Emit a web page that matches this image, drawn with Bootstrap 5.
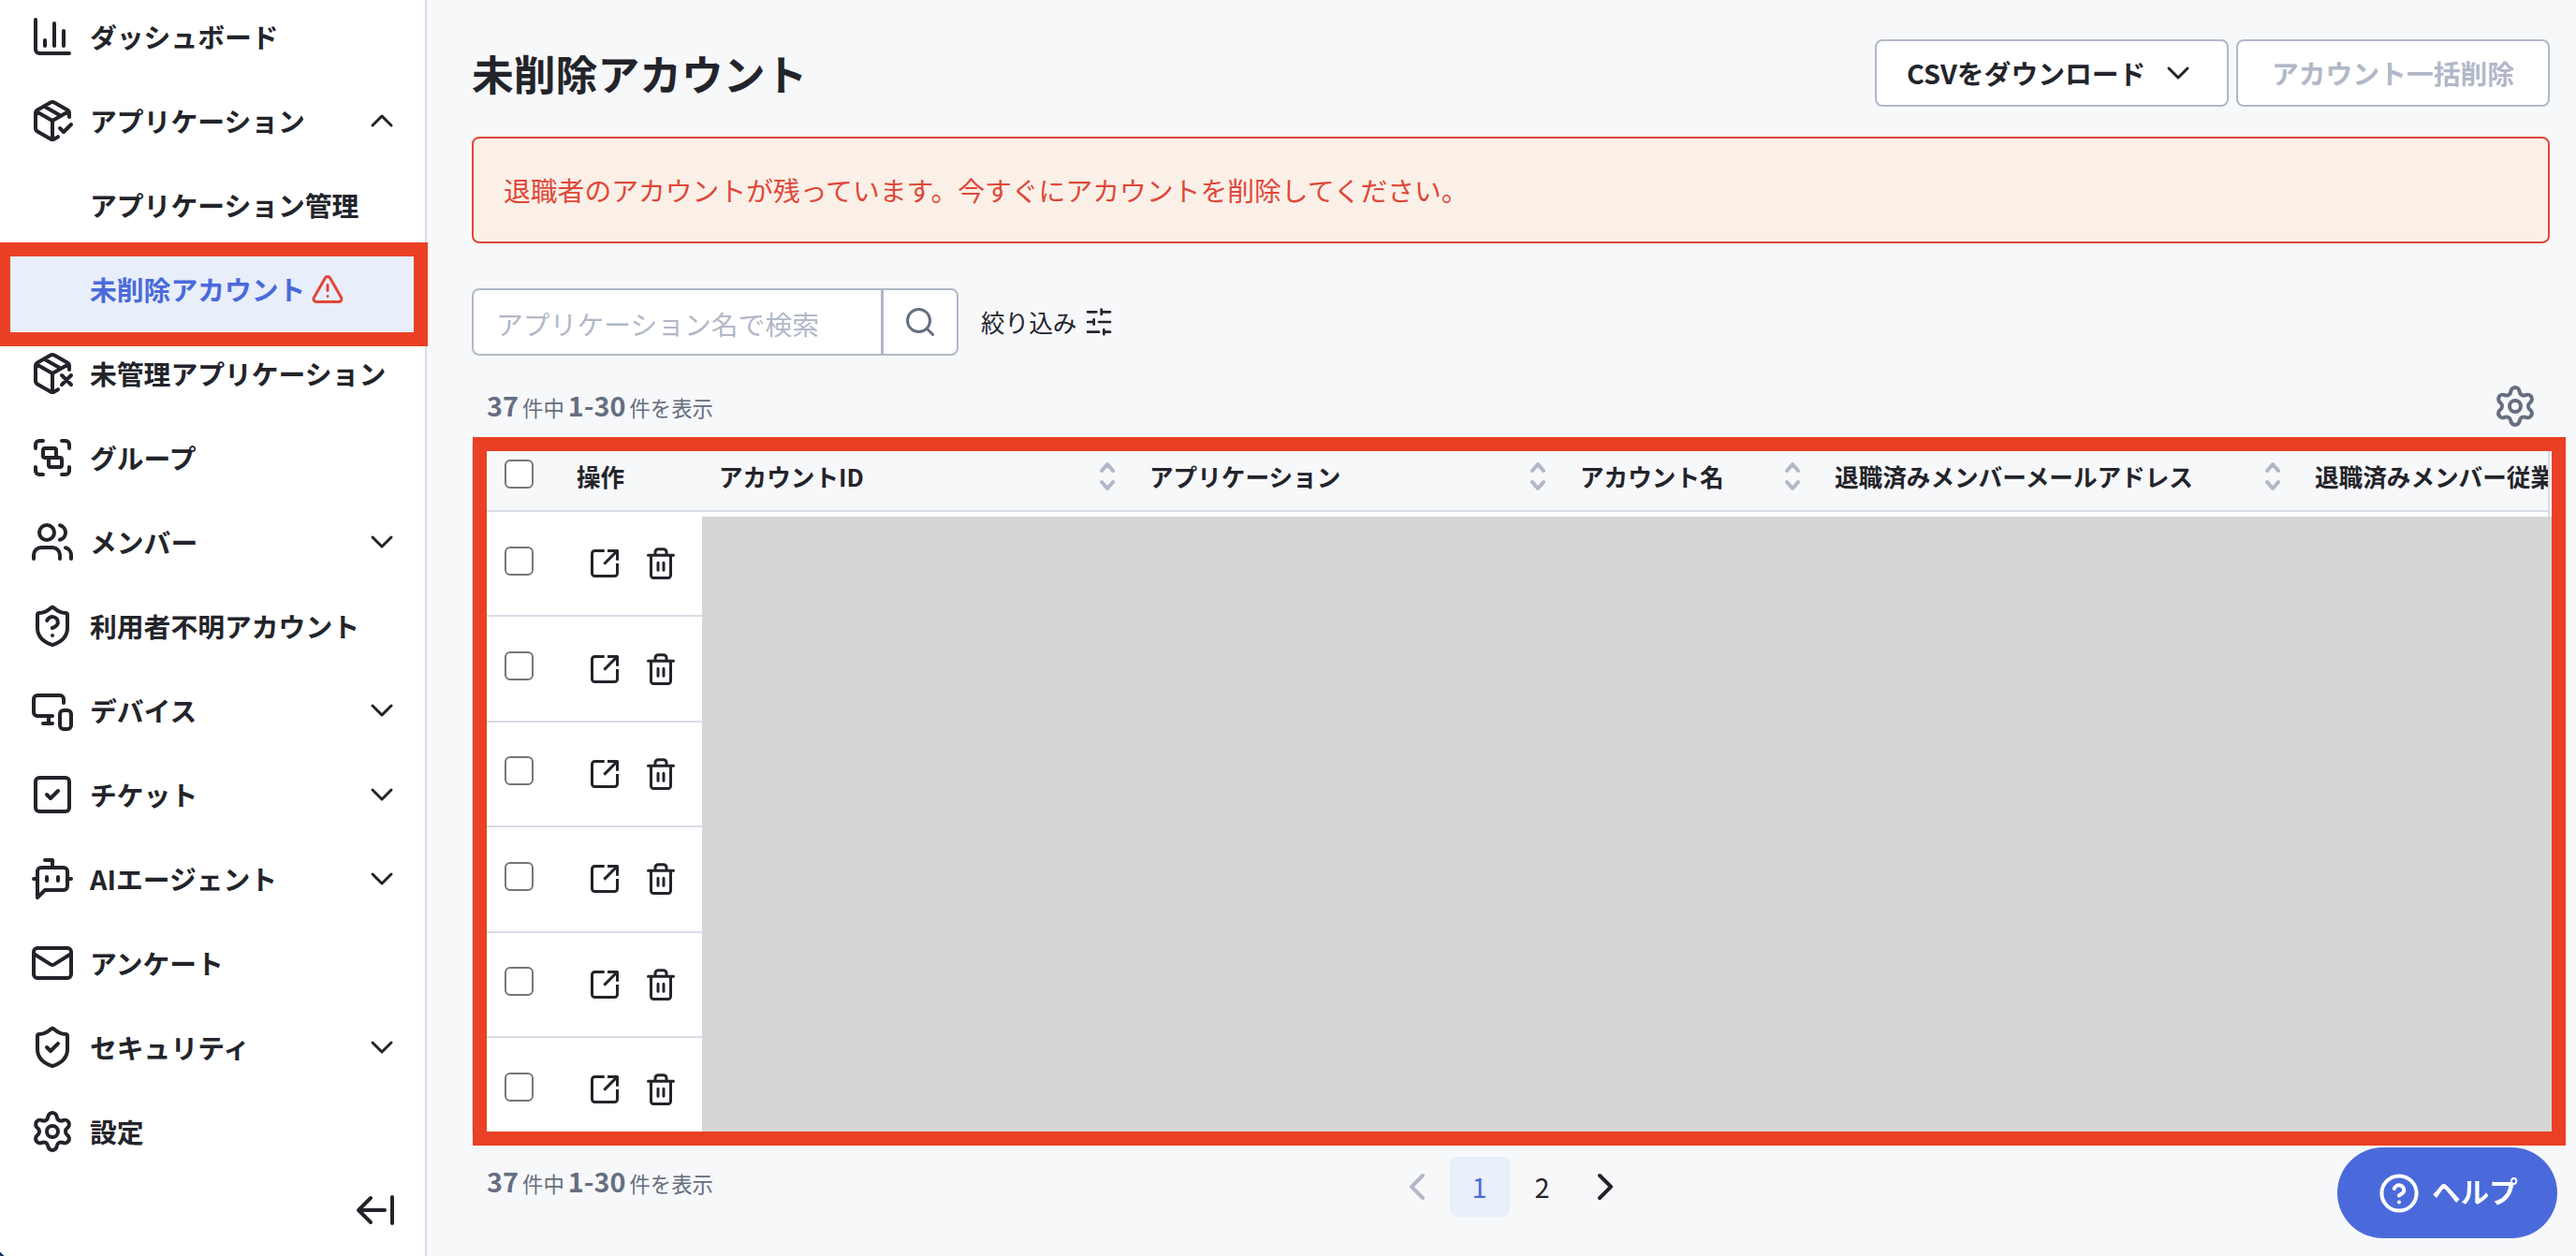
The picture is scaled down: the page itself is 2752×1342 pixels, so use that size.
<!DOCTYPE html>
<html lang="ja">
<head>
  <meta charset="UTF-8">
  <meta name="viewport" content="width=device-width, initial-scale=1.0">
  <title>未削除アカウント</title>
  <link href="https://cdn.jsdelivr.net/npm/bootstrap@5.3.2/dist/css/bootstrap.min.css" rel="stylesheet">
  <style>
    :root {
      --ink: #23242a;
      --muted: #656e80;
      --line: #d9dce7;
      --edge: #b1b8c7;
      --blue: #4a6adb;
      --blue-soft: #e8eefa;
      --danger: #e04739;
      --frame: #ea4025;
    }
    body {
      font-family: "Noto Sans CJK JP", sans-serif;
      font-size: 28.8px;
      line-height: 1.5;
      color: var(--ink);
      background-color: #f7f8fa;
      height: 1342px;
      overflow: hidden;
    }
    svg {
      fill: none;
      stroke: currentColor;
      stroke-width: 2;
      stroke-linecap: round;
      stroke-linejoin: round;
      flex: none;
      display: block;
    }
    .i48 { width: 48px; height: 48px; }
    .i40 { width: 40px; height: 40px; stroke-width: 1.8; }
    .i36 { width: 36px; height: 36px; }
    .i32 { width: 32px; height: 32px; }

    /* sidebar */
    .side {
      width: 456px;
      height: 1342px;
      background: #fff;
      border-right: 2px solid var(--line);
    }
    .side .nav { margin-top: -6px; }
    .side .nav-link {
      height: 90px;
      padding: 0 26px 0 32px;
      gap: 16px;
      color: var(--ink);
      font-weight: 700;
      white-space: nowrap;
    }
    .side .nav-link.sub { padding-left: 96px; gap: 6px; }
    .side .nav-link.active { background: var(--blue-soft); color: var(--blue); }
    .fold-btn { padding: 19px 27px 0 0; }
    .corner {
      position: fixed;
      left: 0;
      bottom: 0;
      width: 4px;
      height: 4px;
      background: linear-gradient(45deg, #1d3a5f 50%, transparent 50%);
    }

    /* main column */
    .main { padding: 42px 28px 0 48px; min-width: 0; }
    .page-title { font-size: 44.8px; font-weight: 700; line-height: 72px; }
    .btn-box {
      height: 72px;
      font-size: 28.8px;
      font-weight: 700;
      color: var(--ink);
      background: #fff;
      border: 2px solid var(--edge);
      border-radius: 8px;
    }
    .btn-box:disabled { color: var(--edge); background: #fff; border-color: var(--edge); opacity: 1; }
    .btn-csv { width: 378px; padding: 0 32px; }
    .btn-del { width: 335px; padding: 0; }
    .alert-left {
      height: 114px;
      margin: 32px 0 48px;
      padding: 0 32px;
      color: var(--danger);
      background: #faf0e7;
      border: 2px solid var(--danger);
      border-radius: 8px;
    }
    .search { width: 520px; height: 72px; }
    .search .form-control {
      font-size: 28.8px;
      padding: 4px 24px 0;
      border: 2px solid var(--edge);
      border-radius: 8px;
    }
    .search .form-control::placeholder { color: var(--edge); }
    .search .btn {
      width: 82px;
      padding: 0;
      color: var(--muted);
      background: #fff;
      border: 2px solid var(--edge);
      border-radius: 8px;
    }
    .filter { font-size: 25.6px; margin-left: 24px; gap: 8px; }
    .count {
      font-size: 22.4px;
      color: var(--muted);
      padding-left: 16px;
      white-space: nowrap;
      line-height: 44px;
      word-spacing: -1px;
    }
    .count b { font-size: 28.8px; }
    .count-row { height: 92px; padding: 16px 13px 0 0; }
    .gear { color: var(--muted); }

    /* table */
    .table-zone { height: 752px; }
    .table-clip {
      height: 740px;
      overflow: hidden;
      background: #fff;
      border: 2px solid var(--line);
    }
    .accounts { width: 2700px; table-layout: fixed; margin: 0; --bs-table-bg: transparent; }
    .accounts th, .accounts td {
      padding: 0 20px;
      vertical-align: middle;
      border-bottom: 2px solid var(--line);
      color: var(--ink);
    }
    .accounts th {
      height: 72px;
      padding: 0 15px 2px 20px;
      font-size: 25.6px;
      background: #f7f8fa;
      white-space: nowrap;
      line-height: 36px;
    }
    .accounts td { height: 112.4px; }
    .accounts th:first-child, .accounts td:first-child { padding: 0 0 0 33px; }
    .accounts .form-check-input {
      display: block;
      width: 31px;
      height: 31px;
      margin: 0 0 6px;
      background-color: #fff;
      border: 2px solid #767676;
      border-radius: 6px;
    }
    .acts { padding-left: 12px; gap: 24px; }
    .sort { width: 20px; height: 34px; color: var(--edge); stroke-width: 4; }
    .mask {
      position: absolute;
      left: 245.5px;
      top: 79.5px;
      right: -2px;
      bottom: 10px;
      background: #d6d6d6;
    }
    .marker { position: absolute; border: 15px solid var(--frame); }
    .marker-table { left: 0.5px; top: -4.7px; width: 2236.5px; height: 756.4px; }
    .marker-nav { left: -4px; top: 258.5px; width: 461px; height: 111px; z-index: 5; }

    /* footer */
    .foot { padding-top: 12px; }
    .pager { gap: 4px; }
    .pager .page-link {
      width: 64px;
      height: 64px;
      padding: 0;
      display: flex;
      align-items: center;
      justify-content: center;
      font-size: 28.8px;
      color: var(--ink);
      background: transparent;
      border: 0;
      border-radius: 8px !important;
      margin: 0;
    }
    .pager .active .page-link { background: #e8eefa; color: var(--blue); }
    .pager .disabled .page-link { color: var(--edge); }
    .help {
      position: fixed;
      left: 2497px;
      top: 1226px;
      width: 235px;
      height: 97px;
      gap: 11px;
      color: #fff;
      background: var(--blue);
      font-size: 30.6px;
      font-weight: 700;
    }
    .help span { padding-bottom: 3px; }
  </style>
</head>
<body>
  <!-- icon set -->
  <svg width="0" height="0" class="position-absolute">
    <symbol id="chart" viewBox="0 0 24 24"><path d="M3 3v16a2 2 0 0 0 2 2h16M18 17V9M13 17V5M8 17v-3"/></symbol>
    <symbol id="box-check" viewBox="0 0 24 24"><path d="m16 16 2 2 4-4M21 10V8a2 2 0 0 0-1-1.73l-7-4a2 2 0 0 0-2 0l-7 4A2 2 0 0 0 3 8v8a2 2 0 0 0 1 1.73l7 4a2 2 0 0 0 2 0l2-1.14M7.5 4.27l9 5.15M3.29 7 12 12l8.71-5M12 22V12"/></symbol>
    <symbol id="box-x" viewBox="0 0 24 24"><path d="M21 10V8a2 2 0 0 0-1-1.73l-7-4a2 2 0 0 0-2 0l-7 4A2 2 0 0 0 3 8v8a2 2 0 0 0 1 1.73l7 4a2 2 0 0 0 2 0l2-1.14M7.5 4.27l9 5.15M3.29 7 12 12l8.71-5M12 22V12M17 13l5 5M17 18l5-5"/></symbol>
    <symbol id="group" viewBox="0 0 24 24"><path d="M3 7V5c0-1.100.9-2 2-2h2M17 3h2c1.100 0 2 .9 2 2v2M21 17v2c0 1.100-.9 2-2 2h-2M7 21H5c-1.100 0-2-.9-2-2v-2"/><rect width="7" height="5" x="7" y="7" rx="1"/><rect width="7" height="5" x="10" y="12" rx="1"/></symbol>
    <symbol id="users" viewBox="0 0 24 24"><path d="M16 21v-2a4 4 0 0 0-4-4H6a4 4 0 0 0-4 4v2M22 21v-2a4 4 0 0 0-3-3.870M16 3.130a4 4 0 0 1 0 7.750"/><circle cx="9" cy="7" r="4"/></symbol>
    <symbol id="shield-q" viewBox="0 0 24 24"><path d="M20 13c0 5-3.500 7.500-7.660 8.950a1 1 0 0 1-.67-.01C7.500 20.500 4 18 4 13V6a1 1 0 0 1 1-1c2 0 4.500-1.200 6.240-2.720a1.170 1.170 0 0 1 1.520 0C14.510 3.810 17 5 19 5a1 1 0 0 1 1 1zM9.100 9a3 3 0 0 1 5.820 1c0 2-3 3-3 3M12 17h.01"/></symbol>
    <symbol id="shield-check" viewBox="0 0 24 24"><path d="M20 13c0 5-3.500 7.500-7.660 8.950a1 1 0 0 1-.67-.01C7.500 20.500 4 18 4 13V6a1 1 0 0 1 1-1c2 0 4.500-1.200 6.240-2.720a1.170 1.170 0 0 1 1.520 0C14.510 3.810 17 5 19 5a1 1 0 0 1 1 1zM9 12l2 2 4-4"/></symbol>
    <symbol id="device" viewBox="0 0 24 24"><path d="M18 8V6a2 2 0 0 0-2-2H4a2 2 0 0 0-2 2v7a2 2 0 0 0 2 2h8M10 19v-4M7 19h5"/><rect width="6" height="10" x="16" y="12" rx="2"/></symbol>
    <symbol id="ticket" viewBox="0 0 24 24"><rect width="18" height="18" x="3" y="3" rx="2"/><path d="m9 12 2 2 4-4"/></symbol>
    <symbol id="bot" viewBox="0 0 24 24"><path d="M12 6V2H8M8 18l-4 4V8a2 2 0 0 1 2-2h12a2 2 0 0 1 2 2v8a2 2 0 0 1-2 2ZM2 12h2M9 11v2M15 11v2M20 12h2"/></symbol>
    <symbol id="mail" viewBox="0 0 24 24"><rect width="20" height="16" x="2" y="4" rx="2"/><path d="m22 7-8.970 5.700a1.940 1.940 0 0 1-2.060 0L2 7"/></symbol>
    <symbol id="gear" viewBox="0 0 24 24"><path d="M9.671 4.136a2.340 2.340 0 0 1 4.659 0 2.340 2.340 0 0 0 3.319 1.915 2.340 2.340 0 0 1 2.330 4.033 2.340 2.340 0 0 0 0 3.831 2.340 2.340 0 0 1-2.330 4.033 2.340 2.340 0 0 0-3.319 1.915 2.340 2.340 0 0 1-4.659 0 2.340 2.340 0 0 0-3.320-1.915 2.340 2.340 0 0 1-2.330-4.033 2.340 2.340 0 0 0 0-3.831A2.340 2.340 0 0 1 6.350 6.051a2.340 2.340 0 0 0 3.319-1.915"/><circle cx="12" cy="12" r="3"/></symbol>
    <symbol id="down" viewBox="0 0 24 24"><path d="m6 9 6 6 6-6"/></symbol>
    <symbol id="up" viewBox="0 0 24 24"><path d="m18 15-6-6-6 6"/></symbol>
    <symbol id="left" viewBox="0 0 24 24"><path d="m15 18-6-6 6-6"/></symbol>
    <symbol id="right" viewBox="0 0 24 24"><path d="m9 18 6-6-6-6"/></symbol>
    <symbol id="warn" viewBox="0 0 24 24"><path d="m21.730 18-8-14a2 2 0 0 0-3.480 0l-8 14A2 2 0 0 0 4 21h16a2 2 0 0 0 1.730-3M12 9v4M12 17h.01"/></symbol>
    <symbol id="search" viewBox="0 0 24 24"><circle cx="11" cy="11" r="8"/><path d="m21 21-4.300-4.300"/></symbol>
    <symbol id="sliders" viewBox="0 0 24 24"><path d="M21 4h-7M10 4H3M21 12h-9M8 12H3M21 20h-5M12 20H3M14 2v4M8 10v4M16 18v4"/></symbol>
    <symbol id="open" viewBox="0 0 24 24"><path stroke-linecap="butt" d="M11.800 3H5a2 2 0 0 0-2 2v14a2 2 0 0 0 2 2h14a2 2 0 0 0 2-2v-7M14 3h7v6.800M20.800 3.200 11.600 12.400"/></symbol>
    <symbol id="trash" viewBox="0 0 24 24"><path d="M3 6.200h18M5 6.500V20.500a1.800 1.800 0 0 0 1.800 1.800h10.400a1.800 1.800 0 0 0 1.800-1.800V6.500M8 6V4a2.200 2.200 0 0 1 2.200-2.200h3.600A2.200 2.200 0 0 1 16 4v2M10 11.500v5.400M14 11.500v5.400"/></symbol>
    <symbol id="help" viewBox="0 0 24 24"><circle cx="12" cy="12" r="9.300"/><path d="M9.400 9.500a2.700 2.700 0 0 1 5.250.9c0 1.800-2.700 2.500-2.700 2.900M12 16.700h.01"/></symbol>
    <symbol id="fold" viewBox="0 0 48 40"><path stroke-width="4" d="M4 20h28M17 7 4 20l13 13M40 6v28"/></symbol>
    <symbol id="sort" viewBox="0 0 20 34"><path d="m4 11 6-7 6 7M4 23l6 7 6-7"/></symbol>
  </svg>

  <div class="d-flex">
    <aside class="side flex-shrink-0">
      <nav class="nav flex-column flex-nowrap" id="sideNav"></nav>
      <div class="fold-btn d-flex justify-content-end"><svg width="48" height="40"><use href="#fold"/></svg></div>
    </aside>

    <main class="main flex-grow-1">
      <div class="d-flex align-items-center">
        <h1 class="page-title mb-0 me-auto">未削除アカウント</h1>
        <button class="btn btn-box btn-csv d-flex align-items-center justify-content-between me-2">CSVをダウンロード<svg class="i40"><use href="#down"/></svg></button>
        <button class="btn btn-box btn-del" disabled>アカウント一括削除</button>
      </div>

      <div class="alert alert-left d-flex align-items-center" role="alert">退職者のアカウントが残っています。今すぐにアカウントを削除してください。</div>

      <div class="d-flex align-items-center">
        <div class="input-group search">
          <input type="text" class="form-control" placeholder="アプリケーション名で検索">
          <button class="btn d-flex align-items-center justify-content-center" aria-label="検索"><svg class="i36"><use href="#search"/></svg></button>
        </div>
        <div class="filter d-flex align-items-center"><span>絞り込み</span><svg class="i32"><use href="#sliders"/></svg></div>
      </div>

      <div class="count-row d-flex align-items-center justify-content-between">
        <div class="count"><b>37</b> 件中 <b>1-30</b> 件を表示</div>
        <svg class="i48 gear"><use href="#gear"/></svg>
      </div>

      <div class="table-zone position-relative">
        <div class="table-clip">
          <table class="table accounts">
            <colgroup>
              <col style="width:90px"><col style="width:152px"><col style="width:460px"><col style="width:460px"><col style="width:272px"><col style="width:513px"><col>
            </colgroup>
            <thead>
              <tr id="headRow"></tr>
            </thead>
            <tbody id="accountRows"></tbody>
          </table>
        </div>
        <div class="mask"></div>
        <div class="marker marker-table"></div>
      </div>

      <div class="foot row g-0">
        <div class="col pt-1"><div class="count"><b>37</b> 件中 <b>1-30</b> 件を表示</div></div>
        <div class="col-auto">
          <ul class="pagination pager mb-0">
            <li class="page-item disabled"><a class="page-link" aria-label="前へ"><svg class="i48"><use href="#left"/></svg></a></li>
            <li class="page-item active"><a class="page-link">1</a></li>
            <li class="page-item"><a class="page-link">2</a></li>
            <li class="page-item"><a class="page-link" aria-label="次へ"><svg class="i48"><use href="#right"/></svg></a></li>
          </ul>
        </div>
        <div class="col"></div>
      </div>
    </main>
  </div>

  <div class="marker marker-nav"></div>
  <div class="corner"></div>
  <button class="btn help rounded-pill d-flex align-items-center justify-content-center p-0"><svg class="i48"><use href="#help"/></svg><span>ヘルプ</span></button>

  <script src="https://cdn.jsdelivr.net/npm/bootstrap@5.3.2/dist/js/bootstrap.bundle.min.js"></script>
  <script>
    const menu = [
      { icon: "chart", label: "ダッシュボード" },
      { icon: "box-check", label: "アプリケーション", arrow: "up" },
      { label: "アプリケーション管理" },
      { label: "未削除アカウント", active: true },
      { icon: "box-x", label: "未管理アプリケーション" },
      { icon: "group", label: "グループ" },
      { icon: "users", label: "メンバー", arrow: "down" },
      { icon: "shield-q", label: "利用者不明アカウント" },
      { icon: "device", label: "デバイス", arrow: "down" },
      { icon: "ticket", label: "チケット", arrow: "down" },
      { icon: "bot", label: "AIエージェント", arrow: "down" },
      { icon: "mail", label: "アンケート" },
      { icon: "shield-check", label: "セキュリティ", arrow: "down" },
      { icon: "gear", label: "設定" }
    ];
    document.getElementById("sideNav").innerHTML = menu.map(m => `
      <a class="nav-link d-flex align-items-center ${m.icon ? "" : "sub"} ${m.active ? "active" : ""}">
        ${m.icon ? `<svg class="i48"><use href="#${m.icon}"/></svg>` : ""}
        <span>${m.label}</span>
        ${m.active ? `<svg class="i36" style="color:var(--danger)"><use href="#warn"/></svg>` : ""}
        ${m.arrow ? `<svg class="i40 ms-auto"><use href="#${m.arrow}"/></svg>` : ""}
      </a>`).join("");

    const heads = ["アカウントID", "アプリケーション", "アカウント名", "退職済みメンバーメールアドレス", "退職済みメンバー従業員番号"];
    document.getElementById("headRow").innerHTML =
      `<th><input type="checkbox" class="form-check-input"></th><th>操作</th>` +
      heads.map(h => `<th><div class="d-flex align-items-center justify-content-between">${h}<svg class="sort"><use href="#sort"/></svg></div></th>`).join("");

    const rowHtml = `<tr>
        <td><input type="checkbox" class="form-check-input"></td>
        <td><div class="acts d-flex align-items-center"><svg class="i36"><use href="#open"/></svg><svg class="i36"><use href="#trash"/></svg></div></td>
        <td colspan="5"></td>
      </tr>`;
    document.getElementById("accountRows").innerHTML = rowHtml.repeat(6);
  </script>
</body>
</html>
